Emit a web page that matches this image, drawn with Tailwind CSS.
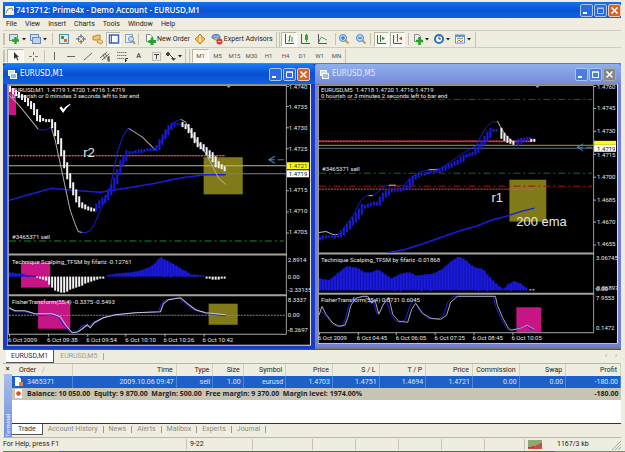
<!DOCTYPE html>
<html lang="en">
<head>
    <meta charset="UTF-8">
    <meta name="viewport" content="width=device-width, initial-scale=1.0">
    <title>7413712: Prime4x - Demo Account - EURUSD,M1</title>
    <!-- Tailwind CSS -->
    <script src="https://cdn.jsdelivr.net/npm/@tailwindcss/browser@4"></script>
</head>
<body class="bg-[#efeddf] font-[Roboto,'Liberation_Sans',sans-serif] text-[7px] leading-[10px] text-[#222] overflow-hidden">
    <div class="flex flex-col pt-[2px] pl-[3px] pr-[4px]">
        <!-- Title bar -->
        <header class="flex items-center h-4 pl-[2px] bg-linear-to-b from-[#1473f0] via-[#0b52cf] to-[#0d62e4] text-white">
            <svg class="w-[9px] h-[9px] mr-[2px]" viewBox="0 0 9 9"><rect width="9" height="9" fill="#f3f1e6"/><path d="M1 7L3 3L7 2L8 5" fill="none" stroke="#8a8a78"/></svg>
            <h1 class="grow font-['Open_Sans',sans-serif] font-semibold text-[8px] whitespace-nowrap">7413712: Prime4x - Demo Account - EURUSD,M1</h1>
            <div class="flex gap-px">
                <button aria-label="Minimize" class="w-[13px] h-[13px] rounded-xs border border-[#a9c4f5] bg-[#2a6be0]"><svg viewBox="0 0 11 11"><path d="M2 8H6" stroke="#fff" stroke-width="2"/></svg></button>
                <button aria-label="Restore" class="w-[13px] h-[13px] rounded-xs border border-[#a9c4f5] bg-[#2a6be0]"><svg viewBox="0 0 11 11"><path d="M2.500 8.500V3.500H8.500V8.500ZM2 3H9" fill="none" stroke="#a9c8ff"/></svg></button>
                <button aria-label="Close" class="w-[13px] h-[13px] rounded-xs border border-[#f0c8b0] bg-[#d9622b]"><svg viewBox="0 0 11 11"><path d="M2.500 2.500L8.500 8.500M8.500 2.500L2.500 8.500" stroke="#fff" stroke-width="1.600"/></svg></button>
            </div>
        </header>

        <!-- Menu -->
        <nav class="flex items-center gap-2 h-[13px] pl-[3px] border-b border-[#cfccbd]">
            <button>File</button>
            <button>View</button>
            <button>Insert</button>
            <button>Charts</button>
            <button>Tools</button>
            <button>Window</button>
            <button>Help</button>
        </nav>

        <!-- Standard toolbar -->
        <div class="flex items-center h-[17px] border-b border-[#cfccbd]">
            <span class="w-[2px] h-3 border-x border-[#c5c2b2] mr-[3px]"></span>
            <button aria-label="New chart" class="w-[21px]"><svg class="w-5 h-3" viewBox="0 0 20 12"><rect x="1.500" y="1.500" width="8" height="6" fill="#d5e3ee" stroke="#71909f"/><path d="M7.500 4V11M4 7.500H11" stroke="#27a52e" stroke-width="2.500"/><path d="M14 5H18L16 7.500Z" fill="#222"/></svg></button>
            <button aria-label="Profiles" class="w-[21px]"><svg class="w-5 h-3" viewBox="0 0 20 12"><rect x="1.500" y="1.500" width="8" height="6" fill="#cfe0f5" stroke="#6789bb"/><rect x="3.500" y="4.500" width="8" height="6" fill="#bcd2ef" stroke="#6789bb"/><path d="M14 5H18L16 7.500Z" fill="#222"/></svg></button>
            <span class="w-px h-3 bg-[#c5c2b2] mx-[2px]"></span>
            <button aria-label="Market watch" class="w-[17px] flex justify-center"><svg class="w-3 h-3" viewBox="0 0 12 12"><rect x="1.500" y="1.500" width="9" height="9" fill="#d9ecf8" stroke="#4a93ad"/><path d="M3 3H6V6H3Z" fill="#2fa52f"/><path d="M6 6H9V9H6Z" fill="#d5702c"/></svg></button>
            <button aria-label="Data window" class="w-[17px] flex justify-center"><svg class="w-3 h-3" viewBox="0 0 12 12"><circle cx="6" cy="6" r="3" fill="none" stroke="#777"/><path d="M6 1V5M6 7V11M1 6H5M7 6H11" stroke="#666"/></svg></button>
            <button aria-label="Navigator" class="w-[17px] flex justify-center"><svg class="w-3 h-3" viewBox="0 0 12 12"><path d="M1 3H4L5 2H8V7H1Z" fill="#f3c563" stroke="#bd8a31"/><path d="M7 6L11 9L9 11L5 9Z" fill="#f7d98f" stroke="#c38f35"/></svg></button>
            <button aria-label="Terminal" class="w-[15px] h-[15px] flex justify-center items-center border border-[#bab7a8] border-r-white border-b-white bg-[#f8f7f0]"><svg class="w-3 h-3" viewBox="0 0 12 12"><rect x="1.500" y="2" width="9" height="8" fill="#fff" stroke="#3d62c6" stroke-width="1.500"/><path d="M3.500 2V10" stroke="#3d62c6"/></svg></button>
            <button aria-label="Strategy tester" class="w-[17px] flex justify-center"><svg class="w-3 h-3" viewBox="0 0 12 12"><rect x="1.500" y="1.500" width="7" height="8" fill="#e9eef4" stroke="#8ba3bb"/><circle cx="7" cy="6" r="2.500" fill="#cde2f5" stroke="#6a8db4"/><path d="M9 8L11 11" stroke="#b88a34" stroke-width="1.500"/></svg></button>
            <span class="w-px h-3 bg-[#c5c2b2] mr-[5px]"></span>
            <button class="flex items-center mr-[4px] whitespace-nowrap"><svg class="w-3 h-3 mr-px" viewBox="0 0 12 12"><path d="M2.500 1.500H6L8.500 4V8.500H2.500Z" fill="#fff" stroke="#788"/><path d="M8 4.500V12M4.500 8.500H12" stroke="#22a52c" stroke-width="2.800"/></svg>New Order</button>
            <button aria-label="MetaEditor" class="w-3 mr-[5px]"><svg class="w-3 h-3" viewBox="0 0 12 12"><path d="M6 1L11 6L6 11L1 6Z" fill="#f6b446" stroke="#c98424"/><path d="M6 3V4M6 5V9" stroke="#fff" stroke-width="1.500"/></svg></button>
            <button class="flex items-center mr-[3px] whitespace-nowrap"><svg class="w-3 h-3 mr-px" viewBox="0 0 12 12"><path d="M1 5Q1 1 5 1.500Q9 1 9 5L6 7Z" fill="#76a9dc" stroke="#487cae"/><path d="M3 5Q5 9 8 6" fill="#f2c66e" stroke="#bd8a31"/><circle cx="8.500" cy="8.500" r="3" fill="#d8392b"/><path d="M7 8.500H10" stroke="#fff"/></svg>Expert Advisors</button>
            <span class="w-[4px] h-[15px] border-x border-[#c5c2b2] mr-px"></span>
            <button aria-label="Bar chart" class="w-[16px] h-[15px] flex justify-center items-center border border-[#bab7a8] border-r-white border-b-white bg-[#f8f7f0]"><svg class="w-3 h-3" viewBox="0 0 12 12"><path d="M2.500 1V10.500H11" fill="none" stroke="#555"/><path d="M5 8H6.500V3H8M9 9V4" fill="none" stroke="#299238"/></svg></button>
            <button aria-label="Candlesticks" class="w-[17px] flex justify-center"><svg class="w-3 h-3" viewBox="0 0 12 12"><path d="M2.500 1V10.500H11" fill="none" stroke="#555"/><path d="M7.500 1V9" stroke="#299238"/><rect x="6" y="2" width="3" height="5" fill="#24b135"/></svg></button>
            <button aria-label="Line chart" class="w-[17px] flex justify-center"><svg class="w-3 h-3" viewBox="0 0 12 12"><path d="M2.500 1V10.500H11" fill="none" stroke="#555"/><path d="M3 9Q5 2 7 5L11 7" fill="none" stroke="#55a35e"/></svg></button>
            <span class="w-px h-3 bg-[#c5c2b2] ml-[4px]"></span>
            <button aria-label="Zoom in" class="w-[17px] flex justify-center"><svg class="w-3 h-3" viewBox="0 0 12 12"><path d="M7 7L10.500 10.500" stroke="#cf9a35" stroke-width="2"/><circle cx="5" cy="5" r="3.500" fill="#bcdcfa" stroke="#4688d3"/><path d="M3 5H7M5 3V7" stroke="#2061b5"/></svg></button>
            <button aria-label="Zoom out" class="w-[17px] flex justify-center"><svg class="w-3 h-3" viewBox="0 0 12 12"><path d="M7 7L10.500 10.500" stroke="#cf9a35" stroke-width="2"/><circle cx="5" cy="5" r="3.500" fill="#bcdcfa" stroke="#4688d3"/><path d="M3 5H7" stroke="#2061b5"/></svg></button>
            <span class="w-px h-3 bg-[#c5c2b2] mr-[3px]"></span>
            <button aria-label="Auto scroll" class="w-[15px] h-[15px] mr-px flex justify-center items-center border border-[#bab7a8] border-r-white border-b-white bg-[#f8f7f0]"><svg class="w-3 h-3" viewBox="0 0 12 12"><path d="M2.500 2V10.500H11M5.500 2V9" fill="none" stroke="#555"/><path d="M7 3.500L10 5.500L7 7.500Z" fill="#22a52c"/></svg></button>
            <button aria-label="Chart shift" class="w-[15px] h-[15px] flex justify-center items-center border border-[#bab7a8] border-r-white border-b-white bg-[#f8f7f0]"><svg class="w-3 h-3" viewBox="0 0 12 12"><path d="M2.500 2V10.500H11" fill="none" stroke="#555"/><path d="M6.500 1V9" stroke="#3467b8"/><path d="M11 3.500L8 5.500L11 7.500Z" fill="#b3452c"/></svg></button>
            <span class="w-px h-3 bg-[#c5c2b2] mx-[3px]"></span>
            <button aria-label="Indicators" class="w-[21px]"><svg class="w-5 h-3" viewBox="0 0 20 12"><path d="M2.500 1.500H6.500L8.500 3.500V8.500H2.500Z" fill="#eee" stroke="#888"/><path d="M7.500 4V12M4 8H11" stroke="#22a52c" stroke-width="2.600"/><path d="M13 5H17L15 7.500Z" fill="#222"/></svg></button>
            <button aria-label="Periods" class="w-[21px]"><svg class="w-5 h-3" viewBox="0 0 20 12"><circle cx="6" cy="6" r="4" fill="#fff" stroke="#2c6fc9" stroke-width="2"/><path d="M6 3.500V6H8" fill="none" stroke="#444"/><path d="M13 5H17L15 7.500Z" fill="#222"/></svg></button>
            <button aria-label="Templates" class="w-[21px]"><svg class="w-5 h-3" viewBox="0 0 20 12"><rect x="1.500" y="2" width="9" height="8" fill="#fff" stroke="#6592cc"/><path d="M1 3H11" stroke="#6592cc" stroke-width="2"/><path d="M3 6L5 5L7 6L9 5" fill="none" stroke="#3c9a49"/><path d="M3 8.500L5 7.500L7 8.500L9 7.500" fill="none" stroke="#c5523f"/><path d="M13 5H17L15 7.500Z" fill="#222"/></svg></button>
            <span class="w-px h-[15px] bg-[#c5c2b2]"></span>
        </div>

        <!-- Line studies and periods -->
        <div class="flex items-center h-[15px] text-[6px] text-[#555]">
            <span class="w-[2px] h-3 border-x border-[#c5c2b2] mr-[2px]"></span>
            <button aria-label="Cursor" class="w-[17px] h-[14px] flex justify-center items-center border border-[#bab7a8] border-r-white border-b-white bg-[#f8f7f0]"><svg class="w-3 h-3" viewBox="0 0 12 12"><path d="M4 2V9L6 7.500L7.500 10.500L8.500 10L7 7H9Z" fill="#333"/></svg></button>
            <button aria-label="Crosshair" class="w-[17px] flex justify-center"><svg class="w-3 h-3" viewBox="0 0 12 12"><path d="M6.500 2V5M6.500 8V11M2 6.500H5M8 6.500H11" stroke="#777"/></svg></button>
            <span class="w-px h-3 bg-[#c5c2b2] ml-[3px]"></span>
            <button aria-label="Vertical line" class="w-[17px] flex justify-center"><svg class="w-3 h-3" viewBox="0 0 12 12"><path d="M6.500 2V10" stroke="#666"/></svg></button>
            <button aria-label="Horizontal line" class="w-[17px] flex justify-center"><svg class="w-3 h-3" viewBox="0 0 12 12"><path d="M2 6.500H10" stroke="#666"/></svg></button>
            <button aria-label="Trendline" class="w-[17px] flex justify-center"><svg class="w-3 h-3" viewBox="0 0 12 12"><path d="M2 10L10 3" stroke="#666"/></svg></button>
            <button aria-label="Channel" class="w-[17px] flex justify-center"><svg class="w-3 h-3" viewBox="0 0 12 12"><path d="M1 8L8 2M3 10L10 4M4 4L6 9M6 3L8 7" stroke="#666"/><path d="M11 7H9V11H11M9 9H11" fill="none" stroke="#333"/></svg></button>
            <button aria-label="Fibonacci" class="w-[17px] flex justify-center"><svg class="w-3 h-3" viewBox="0 0 12 12"><path d="M1 2.500H11M1 5.500H11M1 8.500H8" stroke="#777" stroke-dasharray="1.500 .5"/><path d="M9.500 12V8.500H12M9 10.500H11" fill="none" stroke="#333"/></svg></button>
            <button aria-label="Text" class="w-[17px] font-bold text-[7px]">A</button>
            <button aria-label="Text label" class="w-[17px] flex justify-center"><svg class="w-3 h-3" viewBox="0 0 12 12"><rect x="2.500" y="2.500" width="8" height="8" fill="none" stroke="#888" stroke-dasharray="1 1"/><path d="M4 4.500H9M6.500 4.500V9" stroke="#444"/></svg></button>
            <button aria-label="Arrows" class="w-[21px]"><svg class="w-5 h-3" viewBox="0 0 20 12"><path d="M4 2L6 4L4 6L2 4ZM6 5L9 8" fill="#444" stroke="#444"/><path d="M7 8H12L9.500 11Z" fill="#444"/><path d="M14 5H18L16 7.500Z" fill="#222"/></svg></button>
            <span class="w-[5px] h-[14px] border-x border-[#c5c2b2] mr-[2px]"></span>
            <button class="w-[17px] h-[14px] border border-[#bab7a8] border-r-white border-b-white bg-[#f8f7f0]">M1</button>
            <button class="w-[17px]">M5</button>
            <button class="w-[17px]">M15</button>
            <button class="w-[17px]">M30</button>
            <button class="w-[17px]">H1</button>
            <button class="w-[17px]">H4</button>
            <button class="w-[17px]">D1</button>
            <button class="w-[17px]">W1</button>
            <button class="w-[17px]">MN</button>
            <span class="w-px h-[14px] bg-[#c5c2b2]"></span>
        </div>

        <!-- Chart windows -->
        <main class="flex items-start border-t border-[#7c7a70] bg-[#7c7a70]">
            <section class="grow-311 basis-0 bg-[#1a3cc4] px-1 pb-[3px]">
                <div class="flex items-center h-5 -mx-1 px-[5px] rounded-t-sm bg-linear-to-b from-[#1a7af4] via-[#0a4fd0] to-[#0d62e4] text-white">
                    <svg class="w-[9px] h-[9px] mr-[3px]" viewBox="0 0 9 9"><rect x=".5" y=".5" width="6" height="5" fill="#cde" stroke="#fff"/><rect x="2.500" y="3.500" width="6" height="5" fill="#9bd" stroke="#fff"/></svg>
                    <h2 class="grow font-['DejaVu_Sans_Condensed',sans-serif] text-[8px]">EURUSD,M1</h2>
                    <div class="flex gap-px">
                        <button aria-label="Minimize" class="w-[13px] h-[13px] rounded-xs border border-[#a9c4f5] bg-[#2a6be0]"><svg viewBox="0 0 11 11"><path d="M2 8H6" stroke="#fff" stroke-width="2"/></svg></button>
                        <button aria-label="Maximize" class="w-[13px] h-[13px] rounded-xs border border-[#a9c4f5] bg-[#2a6be0]"><svg viewBox="0 0 11 11"><path d="M2.500 8.500V3H8.500V8.500ZM2 3H9" fill="none" stroke="#fff"/></svg></button>
                        <button aria-label="Close" class="w-[13px] h-[13px] rounded-xs border border-[#f0c8b0] bg-[#d9622b]"><svg viewBox="0 0 11 11"><path d="M2.500 2.500L8.500 8.500M8.500 2.500L2.500 8.500" stroke="#fff" stroke-width="1.600"/></svg></button>
                    </div>
                </div>
                <svg class="block w-full h-auto bg-black fill-[#e8e8e8] text-[6px]" viewBox="7 84 303 261">
                    <path d="M7.500 345V84.500H310" fill="none" stroke="#8a8a80"/>
                    <path d="M309.500 84V344.500H7" fill="none" stroke="#e6e6e6"/>
                    <rect x="9" y="88" width="7" height="27" fill="#c71585"/>
                    <rect x="203" y="157" width="39" height="37" fill="#807a18"/>
                    <rect x="21" y="262" width="29" height="25" fill="#c71585"/>
                    <rect x="38" y="300" width="32" height="28" fill="#c71585"/>
                    <rect x="208" y="303" width="29" height="21" fill="#807a18"/>
                    <path d="M8.500 333V85.500H285.500V333" fill="none" stroke="#999"/>
                    <path d="M8 254H286M8 294.500H286" stroke="#a3a39c" stroke-width="2"/>
                    <path d="M8 333.500H286" stroke="#aaa"/>
                    <path d="M285 86.500H288M285 106.500H288M285 127.500H288M285 148.500H288M285 190.500H288M285 211.500H288M285 232.500H288M9.500 333V336M48.500 333V336M87.500 333V336M125.500 333V336M164.500 333V336M203.500 333V336" stroke="#aaa"/>
                    <path d="M225 85H231L228 88Z" fill="#8a96b8"/>
                    <path d="M9 155.500H225" stroke="#c81e3c"/>
                    <path d="M9 155.500H225" stroke="#e8a0a8" stroke-dasharray="1 2"/>
                    <path d="M9 165.500H285" stroke="#c9b76c"/>
                    <path d="M9 173.500H285" stroke="#77808a"/>
                    <path d="M9 240.500H283" stroke="#1f8a1f" stroke-dasharray="7 3 2 3"/>
                    <path d="M9 314.500H285" stroke="#888" stroke-dasharray="2 1"/>
                    <path d="M9 200L30 194L52 188L72 190L100 192L125 188L155 183L168 180L185 177L205 174.500H225" fill="none" stroke="#1a1ae0" stroke-width="1.500"/>
                    <path d="M9 95L17 103L27 115L38 129M51 127L55 140L63 177L70 210L75 224L78 231L82 232M128 128L142 137L155 150M180 119L185 122L193 137L205 153L218 178L225 184" fill="none" stroke="#aaa"/>
                    <path d="M38 129L45 130L51 127M82 232L86 232L90 230L94 224L100 210L110 187L117 152L123 135L128 128M155 149L163 138L172 123L180 119" fill="none" stroke="#1a1acc"/>
                    <path d="M268 159.500H274M277 159.500H283M274 156L268 159.500L274 163" fill="none" stroke="#3a88b8"/>
                    <path d="M60 108L63 112Q66 107 70 104Q65 107 63 110L61 107Z" fill="#fff" stroke="#fff"/>
                    <g id="bars-m1"></g>
                    <path d="M9 308L15 311H25L35 313L40 315L51 314L58 316L64 325L70 331L76 332L79 328L84 324L88 326L93 322L102 317L114 314L135 312L158 311L161 303L166 299L178 297L185 303L193 309L203 312L215 314L225 315" fill="none" stroke="#2020e0"/>
                    <path d="M9 307L15 310H25L35 313H52L60 316L66 325L72 332L78 331L82 328L87 324L90 327L94 322L103 317L115 314L135 312L160 311L163 303L168 299L180 297L187 303L195 309L205 312L215 313L225 314" fill="none" stroke="#c8c8c8"/>
                    <rect x="286" y="162" width="22" height="7" fill="#ff0"/>
                    <rect x="286" y="170" width="22" height="7" fill="#fff"/>
                    <text x="12" y="92" xml:space="preserve">EURUSD,M1  1.4719 1.4720 1.4716 1.4719</text>
                    <text x="12" y="98">0 hourish or 0 minutes 3 seconds left to bar end</text>
                    <text x="12" y="239">#3465371 sell</text>
                    <text x="83" y="157" class="font-['Liberation_Sans',sans-serif] text-[13px]">r2</text>
                    <text x="12" y="263">Technique Scalping_TFSM by fifariz -0.12761</text>
                    <text x="12" y="303">FisherTransform(55,4) -0.3375 -0.5493</text>
                    <text x="288" y="89">1.4740</text>
                    <text x="288" y="109">1.4735</text>
                    <text x="288" y="130">1.4730</text>
                    <text x="288" y="151">1.4725</text>
                    <text x="288" y="168" class="fill-[#333]">1.4721</text>
                    <text x="288" y="176" class="fill-[#111]">1.4719</text>
                    <text x="288" y="192">1.4715</text>
                    <text x="288" y="213">1.4710</text>
                    <text x="288" y="234">1.4705</text>
                    <text x="287" y="261">2.8914</text>
                    <text x="287" y="278">0.00</text>
                    <text x="287" y="291">-2.33135</text>
                    <text x="287" y="301">8.3337</text>
                    <text x="287" y="316">0.00</text>
                    <text x="287" y="331">-8.2697</text>
                    <text x="8" y="341">6 Oct 2009</text>
                    <text x="47" y="341">6 Oct 09:38</text>
                    <text x="86" y="341">6 Oct 09:54</text>
                    <text x="125" y="341">6 Oct 10:10</text>
                    <text x="163" y="341">6 Oct 10:26</text>
                    <text x="202" y="341">6 Oct 10:42</text>
                </svg>
            </section>

            <section class="grow-307 basis-0 bg-[#7480d4] pl-[3px] pr-[3px] pb-[3px]">
                <div class="flex items-center h-5 -mx-[3px] px-[5px] rounded-t-sm bg-linear-to-b from-[#8fb0ee] to-[#7888da] text-[#e4e8f8]">
                    <svg class="w-[9px] h-[9px] mr-[3px]" viewBox="0 0 9 9"><rect x=".5" y=".5" width="6" height="5" fill="#cde" stroke="#fff"/><rect x="2.500" y="3.500" width="6" height="5" fill="#9bd" stroke="#fff"/></svg>
                    <h2 class="grow font-['DejaVu_Sans_Condensed',sans-serif] text-[8px]">EURUSD,M5</h2>
                    <div class="flex gap-px">
                        <button aria-label="Minimize" class="w-[13px] h-[13px] rounded-xs border border-[#a9c4f5] bg-[#4c7cdc]"><svg viewBox="0 0 11 11"><path d="M2 8H6" stroke="#fff" stroke-width="2"/></svg></button>
                        <button aria-label="Maximize" class="w-[13px] h-[13px] rounded-xs border border-[#a9c4f5] bg-[#4c7cdc]"><svg viewBox="0 0 11 11"><path d="M2.500 8.500V3H8.500V8.500ZM2 3H9" fill="none" stroke="#fff"/></svg></button>
                        <button aria-label="Close" class="w-[13px] h-[13px] rounded-xs border border-[#a9a9a9] bg-[#858585]"><svg viewBox="0 0 11 11"><path d="M2.500 2.500L8.500 8.500M8.500 2.500L2.500 8.500" stroke="#fff" stroke-width="1.600"/></svg></button>
                    </div>
                </div>
                <svg class="block w-full h-auto bg-black fill-[#e8e8e8] text-[6px]" viewBox="317 84 301 261">
                    <path d="M317.500 345V84.500H618" fill="none" stroke="#8a8a80"/>
                    <path d="M617.500 84V344.500H317" fill="none" stroke="#e6e6e6"/>
                    <rect x="509" y="180" width="37" height="42" fill="#807a18"/>
                    <rect x="516" y="308" width="25" height="25" fill="#c71585"/>
                    <path d="M317.500 333V85.500H593.500V333" fill="none" stroke="#999"/>
                    <path d="M317 254H594M317 294.500H594" stroke="#a3a39c" stroke-width="2"/>
                    <path d="M317 333.500H594" stroke="#aaa"/>
                    <path d="M593 86.500H596M593 108.500H596M593 131.500H596M593 154.500H596M593 177.500H596M593 200.500H596M593 222.500H596M593 245.500H596M318.500 333V336M357.500 333V336M395.500 333V336M434.500 333V336M473.500 333V336M512.500 333V336" stroke="#aaa"/>
                    <path d="M534 85H540L537 88Z" fill="#8a96b8"/>
                    <path d="M318 99.500H592M318 186.500H592" stroke="#b01010" stroke-dasharray="7 3 2 3"/>
                    <path d="M318 141.500H532" stroke="#901820" stroke-width="2"/>
                    <path d="M318 141.500H532M318 189.500H534" stroke="#c06068" stroke-dasharray="2 1"/>
                    <path d="M318 145.500H593" stroke="#a8a020"/>
                    <path d="M318 148.500H593" stroke="#56707c"/>
                    <path d="M318 173.500H592" stroke="#176a17" stroke-dasharray="7 3 2 3"/>
                    <path d="M388 253L404 250L420 245L440 238L460 231L475 227L490 221L505 217L520 212L534 208.500" fill="none" stroke="#1a1ae0" stroke-width="1.500"/>
                    <path d="M338 235L345 226L352 216L360 201L365 196H372L380 190L385 186H403L410 178L420 172L430 170L440 169L450 162L460 155L470 149L476 146L480 137L486 127L492 122H497M513 143L518 143L525 138" fill="none" stroke="#1a1acc"/>
                    <path d="M318 233L325 232L332 235H338M368 196H372M388 185.500H395M428 170H437M497 121L500 127L505 135L513 143" fill="none" stroke="#bbb"/>
                    <path d="M577 147.500H583M586 147.500H592M583 144L577 147.500L583 151" fill="none" stroke="#3a88b8"/>
                    <g id="bars-m5"></g>
                    <path d="M318 308L320 312L325 317L332 325L336 327H342L345 318L348 306L353 299L365 297L369 304L372 300L376 314L380 311L385 299L390 315L395 322L400 323L405 320L409 307L413 300L419 312L427 319L438 320L443 316L447 303L453 297H493L495 306L500 318L506 329L509 331L518 329L526 327L533 331" fill="none" stroke="#2020e0"/>
                    <path d="M318 316L321 307L325 315L332 324L338 327L344 326L347 318L350 306L355 299L362 297H367L371 304L374 300L378 315L382 306L388 298L392 315L398 322L407 323L411 310L415 304L422 314L430 319L440 320L446 316L450 303L457 297H495L497 306L502 318L508 329L511 331L520 329L527 326L534 330" fill="none" stroke="#a8a8a8"/>
                    <rect x="594" y="141" width="22" height="4" fill="#ff0"/>
                    <rect x="594" y="145" width="22" height="7" fill="#fff"/>
                    <text x="320" y="92" xml:space="preserve">EURUSD,M5  1.4718 1.4720 1.4716 1.4719</text>
                    <text x="320" y="98">0 hourish or 3 minutes 2 seconds left to bar end</text>
                    <text x="321" y="171">#3465371 sell</text>
                    <text x="491" y="202" class="font-['Liberation_Sans',sans-serif] text-[13px]">r1</text>
                    <text x="516" y="226" class="font-['Liberation_Sans',sans-serif] text-[13px]">200 ema</text>
                    <text x="320" y="263">Technique Scalping_TFSM by fifariz -0.01868</text>
                    <text x="320" y="303">FisherTransform(55,4) 0.8731 0.6045</text>
                    <text x="597" y="89">1.4760</text>
                    <text x="597" y="110">1.4745</text>
                    <text x="597" y="133">1.4730</text>
                    <text x="597" y="151" class="fill-[#111]">1.4719</text>
                    <text x="597" y="157">1.4715</text>
                    <text x="597" y="179">1.4700</text>
                    <text x="597" y="202">1.4685</text>
                    <text x="597" y="224">1.4670</text>
                    <text x="597" y="247">1.4655</text>
                    <text x="596" y="261">3.06745</text>
                    <text x="596" y="292">0.00</text>
                    <text x="595" y="291">-0.06897</text>
                    <text x="596" y="301">7.9553</text>
                    <text x="596" y="331">0.1472</text>
                    <text x="317" y="341">6 Oct 2009</text>
                    <text x="356" y="341">6 Oct 04:45</text>
                    <text x="395" y="341">6 Oct 06:05</text>
                    <text x="434" y="341">6 Oct 07:25</text>
                    <text x="472" y="341">6 Oct 08:45</text>
                    <text x="511" y="341">6 Oct 10:05</text>
                </svg>
            </section>
        </main>

        <!-- Chart tabs -->
        <div class="flex items-center h-[14px] pl-[3px] border-t border-[#555] text-[#999]">
            <button class="h-[13px] px-[5px] bg-white border-r border-b border-[#555] text-[#333]">EURUSD,M1</button>
            <button class="px-[6px] border-r border-[#aaa] leading-[7px]">EURUSD,M5</button>
            <span class="grow"></span>
            <button aria-label="Scroll left" class="w-[10px]">‹</button>
            <button aria-label="Scroll right" class="w-[10px]">›</button>
        </div>

        <!-- Terminal -->
        <section class="flex border-t border-[#b9b6a6] h-[74px]">
            <div class="w-[9px] flex flex-col items-center shrink-0">
                <button aria-label="Close terminal" class="h-[10px] font-bold text-[#222]">×</button>
                <div class="grow w-2 bg-linear-to-t from-[#a9bdec] to-[#6f8fdd] text-white text-[6px] leading-[8px] [writing-mode:vertical-rl] rotate-180">Terminal</div>
            </div>
            <div class="grow flex flex-col">
                <div class="grow bg-white border-b border-[#333]">
                    <table class="w-full table-fixed text-right whitespace-nowrap leading-[10px]">
                        <colgroup>
                            <col class="w-[10%]"><col class="w-[17%]"><col class="w-[6%]"><col class="w-[5%]"><col class="w-[7%]"><col><col><col><col><col><col><col class="w-[9%]">
                        </colgroup>
                        <thead class="bg-[#efeddf] h-3">
                            <tr class="*:font-normal *:pr-[3px] *:border-r *:border-[#d3d0c0]">
                                <th class="text-left pl-[7px]">Order <span class="text-[#aaa] pl-1">/</span></th>
                                <th>Time</th><th>Type</th><th>Size</th><th>Symbol</th><th>Price</th><th>S / L</th><th>T / P</th><th>Price</th><th>Commission</th><th>Swap</th><th>Profit</th>
                            </tr>
                        </thead>
                        <tbody>
                            <tr class="h-3 bg-[#1c60c8] text-[#dce8fa] *:pr-[2px] *:border-r *:border-[#4c86da]">
                                <td class="text-left"><span class="flex items-center"><svg class="w-[9px] h-[9px] ml-[2px] mr-1" viewBox="0 0 9 9"><path d="M1 0H5L7 2V9H1Z" fill="#fff"/><path d="M5 5H9V9H5Z" fill="#e08340"/></svg>3465371</span></td>
                                <td>2009.10.06 09:47</td><td>sell</td><td>1.00</td><td>eurusd</td><td>1.4703</td><td>1.4751</td><td>1.4694</td><td>1.4721</td><td>0.00</td><td>0.00</td><td>-180.00</td>
                            </tr>
                            <tr class="h-3 bg-[#c8c5b5] font-['Open_Sans',sans-serif] font-bold text-[#1c1c1c]">
                                <td colspan="11" class="text-left"><span class="flex items-center whitespace-pre"><svg class="w-[9px] h-[9px] ml-[2px] mr-1" viewBox="0 0 9 9"><path d="M1 0H8V9H1Z" fill="#fff"/><circle cx="4.500" cy="4.500" r="2.300" fill="#d4502c"/></svg>Balance: 10 050.00  Equity: 9 870.00  Margin: 500.00  Free margin: 9 370.00  Margin level: 1974.00%</span></td>
                                <td class="pr-[2px]">-180.00</td>
                            </tr>
                        </tbody>
                    </table>
                </div>
                <div class="flex items-start h-[13px] text-[#8a8a8a]">
                    <button class="h-[11px] px-[6px] bg-white border-r border-b border-[#555] text-[#333]">Trade</button>
                    <button class="px-[5px] mt-[2px] leading-[7px] border-r border-[#999]">Account History</button>
                    <button class="px-[5px] mt-[2px] leading-[7px] border-r border-[#999]">News</button>
                    <button class="px-[5px] mt-[2px] leading-[7px] border-r border-[#999]">Alerts</button>
                    <button class="px-[5px] mt-[2px] leading-[7px] border-r border-[#999]">Mailbox</button>
                    <button class="px-[5px] mt-[2px] leading-[7px] border-r border-[#999]">Experts</button>
                    <button class="px-[5px] mt-[2px] leading-[7px] border-r border-[#999]">Journal</button>
                </div>
            </div>
        </section>

        <!-- Status bar -->
        <footer class="flex items-center h-[14px] border-t border-[#b9b6a6] *:h-[11px]">
            <span class="w-[183px]">For Help, press F1</span>
            <span class="w-[66px] pl-[3px] border-l border-[#c5c2b2]">9-22</span>
            <span class="grow border-l border-[#c5c2b2]"></span>
            <span class="w-[43px] border-l border-[#c5c2b2]"></span>
            <span class="w-[43px] border-l border-[#c5c2b2]"></span>
            <span class="w-[43px] border-l border-[#c5c2b2]"></span>
            <span class="w-[43px] border-l border-[#c5c2b2]"></span>
            <span class="w-[40px] border-l border-[#c5c2b2]"></span>
            <span class="w-[33px] pl-[3px] border-l border-[#c5c2b2]"><svg class="w-[15px] h-[9px] mt-px" viewBox="0 0 15 9"><path d="M1 0V8M3 0V8M5 0V8M7 0V6M9 0V5M11 0V4M13 0V3" stroke="#4c7a2c" stroke-width="1.200"/><path d="M1 9V7M3 9V7M5 9V6M7 9V6M9 9V5M11 9V4M13 9V3" stroke="#c22222" stroke-width="1.600"/></svg></span>
            <span class="w-[54px]">1167/3 kb</span>
            <svg class="w-[10px]" viewBox="0 0 10 11"><path d="M1 11L10 2M4 11L10 5M7 11L10 8" stroke="#aaa79a"/></svg>
        </footer>
    </div>
    <!-- Taskbar edge -->
    <div class="flex h-1 ml-[3px] bg-[#2468d8]">
        <div class="w-[56px] bg-[#3c963c]"></div>
        <div class="grow"></div>
        <div class="w-[70px] bg-[#19a4ea]"></div>
    </div>

    <script>
        const BLUE = '#1a1ae0';
        const WHITE = '#f4f4f4';

        // Price runs: colour and the points that the bars follow
        const PRICES = {
            'bars-m1': [
                [WHITE, [[9,88],[17,93],[25,98],[33,106],[40,119],[50,121],[53,122],[56,130],[60,141],[63,153],[66,165],[70,180],[75,192],[80,203],[86,207],[94,209]]],
                [BLUE, [[95,208],[107,197],[115,183],[122,163],[128,153],[135,152],[143,150],[155,149],[158,147],[163,138],[170,128],[175,124],[180,124]]],
                [WHITE, [[181,124],[187,127],[192,133],[198,143],[205,149],[212,156],[218,165],[226,169]]]
            ],
            'bars-m5': [
                [BLUE, [[318,239],[325,237],[333,237],[340,235],[345,230],[355,219],[363,207],[370,205],[378,203],[385,195],[390,191],[400,190],[408,187],[413,179],[420,175],[430,173],[440,171],[450,166],[460,161],[465,157],[475,153],[481,146],[485,140],[492,131],[498,130]]],
                [WHITE, [[500,131],[504,137],[510,142],[515,144]]],
                [BLUE, [[517,144],[522,140],[530,138]]],
                [WHITE, [[530,140],[535,141]]]
            ]
        };

        // Histogram runs: colour, base line and the outline
        const HISTOGRAMS = {
            'bars-m1': [
                [BLUE, 276, [[9,272],[20,273],[28,275],[36,275]]],
                [WHITE, 276, [[36,277],[45,280],[50,286],[55,291],[62,292],[70,289],[80,285],[90,281],[100,278],[105,277]]],
                [BLUE, 276, [[106,275],[115,273],[130,272],[140,270],[150,266],[155,262],[158,258],[160,257],[170,262],[180,268],[190,274],[203,275]]],
                [WHITE, 276, [[205,278],[215,279],[226,277]]]
            ],
            'bars-m5': [
                [BLUE, 291, [[318,279],[328,281],[335,275],[345,267],[355,268],[363,273],[370,273],[377,270],[383,274],[390,279],[400,274],[408,273],[415,276],[425,275],[433,274],[442,269],[450,262],[458,257],[465,261],[472,267],[482,270],[490,279],[498,287],[503,290],[507,285],[513,282],[520,284],[527,290]]],
                [WHITE, 290, [[529,291],[535,291]]]
            ]
        };

        function valueAt(points, x) {
            for (let i = 1; i < points.length; i++) {
                const [x0, y0] = points[i - 1];
                const [x1, y1] = points[i];
                if (x <= x1) return y0 + (y1 - y0) * (x - x0) / (x1 - x0);
            }
            return points[points.length - 1][1];
        }

        function addBar(group, x, top, bottom, color) {
            const bar = document.createElementNS('http://www.w3.org/2000/svg', 'rect');
            bar.setAttribute('x', x);
            bar.setAttribute('y', Math.round(top));
            bar.setAttribute('width', 2);
            bar.setAttribute('height', Math.max(1, Math.round(bottom - top)));
            bar.setAttribute('fill', color);
            group.appendChild(bar);
        }

        Object.keys(PRICES).forEach(id => {
            const group = document.getElementById(id);
            PRICES[id].forEach(([color, points]) => {
                const end = points[points.length - 1][0];
                for (let x = points[0][0]; x < end; x += 3) {
                    const a = valueAt(points, x);
                    const b = valueAt(points, x + 3);
                    const pad = Math.min(3, 1 + Math.abs(b - a) / 2);
                    addBar(group, x, Math.min(a, b) - pad, Math.max(a, b) + pad, color);
                }
            });
            HISTOGRAMS[id].forEach(([color, base, points]) => {
                const end = points[points.length - 1][0];
                // A dim body keeps the blue histograms solid between the bars
                if (color === BLUE) {
                    const body = document.createElementNS('http://www.w3.org/2000/svg', 'path');
                    const outline = points.map(([x, y]) => `L${x} ${y}`).join('');
                    body.setAttribute('d', `M${points[0][0]} ${base}${outline}L${end} ${base}Z`);
                    body.setAttribute('fill', '#1212a0');
                    group.appendChild(body);
                }
                for (let x = points[0][0]; x < end; x += 3) {
                    const y = valueAt(points, x);
                    addBar(group, x, Math.min(y, base), Math.max(y, base), color);
                }
            });
        });
    </script>
</body>
</html>
